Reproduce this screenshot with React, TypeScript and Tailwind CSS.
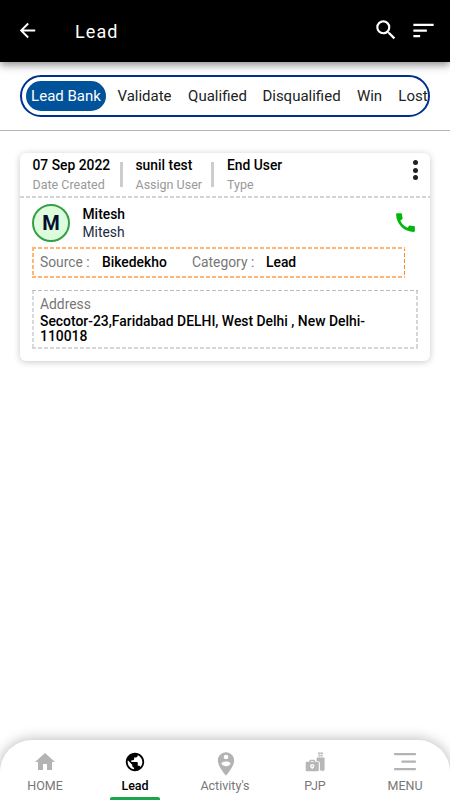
import React, { useState } from 'react';
import {
  MdArrowBack,
  MdCall,
  MdHome,
  MdPersonPinCircle,
  MdPublic,
  MdSearch,
  MdSort
} from 'react-icons/md';

const tabs = [
  { id: 'bank', name: 'Lead Bank', width: 'w-[80px]' },
  { id: 'validate', name: 'Validate', width: 'w-[77px]' },
  { id: 'qualified', name: 'Qualified', width: 'w-[69px]' },
  { id: 'disqualified', name: 'Disqualified', width: 'w-[99px]' },
  { id: 'win', name: 'Win', width: 'w-[37px]' },
  { id: 'lost', name: 'Lost', width: 'w-[50px]' }
];

// Dashed outlines with a 4px dash and a 2px gap
const grayDashes =
  '[background:linear-gradient(90deg,#bdbdbd_4px,transparent_0)_0_0/6px_1px_repeat-x,linear-gradient(90deg,#d6d6d6_4px,transparent_0)_0_100%/6px_2px_repeat-x,linear-gradient(#dadada_4px,transparent_0)_0_0/2px_6px_repeat-y,linear-gradient(#d6d6d6_4px,transparent_0)_100%_0/2px_6px_repeat-y]';
const orangeDashes =
  '[background:linear-gradient(90deg,#ffb573_4px,transparent_0)_0_0/6px_2px_repeat-x,linear-gradient(90deg,#ffb573_4px,transparent_0)_0_100%/6px_2px_repeat-x,linear-gradient(#ffb573_4px,transparent_0)_0_0/2px_6px_repeat-y,linear-gradient(#ff8a20_4px,transparent_0)_100%_0/1px_6px_repeat-y]';
const bottomDashes =
  '[background:linear-gradient(90deg,#d4d4d4_4px,transparent_0)_0_100%/6px_2px_repeat-x]';

const LuggageIcon: React.FC = () => (
  <svg width="20" height="20" viewBox="0 0 20 20" fill="#b7b7b7">
    <path d="M13 0.500h5v1.200h-5zM13.600 1.700h.8v3.600h-.8zM16.600 1.700h.8v3.600h-.8zM14.400 3.300h2.200v.9h-2.200z" />
    <path d="M12.600 5.600h6a1 1 0 0 1 1 1v10.800a1 1 0 0 1-1 1h-.2v.8h-1.200v-.8H14.900V11a1.700 1.700 0 0 0-1.700-1.700H11.600V6.600a1 1 0 0 1 1-1z" />
    <path
      fillRule="evenodd"
      d="M4.300 9.800V9A1.300 1.300 0 0 1 5.600 7.700h3.200A1.300 1.300 0 0 1 10.100 9v.8h2.500A1.200 1.200 0 0 1 13.800 11v7a1.200 1.200 0 0 1-1.200 1.200H1.900A1.200 1.200 0 0 1 .7 18v-7A1.200 1.200 0 0 1 1.900 9.800zM5.600 9.800h3.200V9H5.600zM7.200 12a2.200 2.200 0 0 0-2.200 2.100c0 1.300 2.200 3.100 2.200 3.100s2.200-1.800 2.200-3.100A2.200 2.200 0 0 0 7.200 12zM7.200 13.300a.8.8 0 1 1 0 1.600.8.8 0 0 1 0-1.600z"
    />
  </svg>
);

const MenuLinesIcon: React.FC = () => (
  <svg width="24" height="20" viewBox="0 0 24 20" stroke="#b3b3b3" strokeWidth="2.2" strokeLinecap="round">
    <path d="M2 2.200h20M9.300 9.700H22M2 17.200h20" />
  </svg>
);

const navItems = [
  { id: 'home', name: 'HOME', icon: <MdHome className="w-[24px] h-[24px]" /> },
  { id: 'lead', name: 'Lead', icon: <MdPublic className="w-[22px] h-[22px]" /> },
  { id: 'activity', name: "Activity's", icon: <MdPersonPinCircle className="w-[28px] h-[28px] mt-[4px] ml-px" /> },
  { id: 'pjp', name: 'PJP', icon: <LuggageIcon /> },
  { id: 'menu', name: 'MENU', icon: <MenuLinesIcon /> }
];

const App: React.FC = () => {
  const [activeTab, setActiveTab] = useState('bank');
  const [activeNav, setActiveNav] = useState('lead');

  return (
    <div className="h-screen w-full bg-white flex flex-col overflow-hidden font-['Roboto',sans-serif] text-black">
      {/* Top Bar */}
      <header className="h-[62px] shrink-0 bg-black text-white flex items-center pl-[16px] pr-[13px] shadow-[0_3px_8px_rgba(0,0,0,0.45)]">
        <button>
          <MdArrowBack className="w-[23px] h-[23px] -mt-px" />
        </button>
        <h1 className="ml-[36px] mt-[2px] flex-1 text-[18px] leading-6 tracking-[1.1px]">Lead</h1>
        <button>
          <MdSearch className="w-[26px] h-[26px] -mt-[3px]" />
        </button>
        <button className="ml-[11px]">
          <MdSort className="w-[27px] h-[27px] -mt-[2px]" />
        </button>
      </header>

      {/* Stage Tabs */}
      <div className="h-[69px] shrink-0 px-5 pt-[13px] border-b border-[#b5b5b5]">
        <div className="h-[42px] flex items-center pl-1 rounded-[21px] border-2 border-[#00308f] overflow-hidden">
          {tabs.map((tab) => (
            <button
              key={tab.id}
              onClick={() => setActiveTab(tab.id)}
              className={`${tab.width} h-[30px] shrink-0 rounded-full text-[15px] whitespace-nowrap ${
                activeTab === tab.id ? 'bg-[#00529b] text-white' : 'text-[#222]'
              }`}
            >
              {tab.name}
            </button>
          ))}
        </div>
      </div>

      {/* Lead Card */}
      <main className="flex-1 px-5 pt-[22px]">
        <div className="h-[208px] rounded-[6px] bg-white shadow-[0_1px_7px_rgba(0,0,0,0.22)]">
          <div className={`h-[45px] flex pl-[12.5px] pr-[11px] pt-[3px] ${bottomDashes}`}>
            <div className="w-[87.5px]">
              <div className="text-[13.85px] leading-[18px] font-medium">07 Sep 2022</div>
              <div className="text-[12.5px] leading-[21px] text-[#999]">Date Created</div>
            </div>
            <div className="w-[3px] h-[25px] mt-[6px] bg-[#cdcdcd]" />
            <div className="w-[88px] pl-[12.5px]">
              <div className="text-[13.85px] leading-[18px] font-medium">sunil test</div>
              <div className="text-[12.5px] leading-[21px] text-[#999]">Assign User</div>
            </div>
            <div className="w-[3px] h-[25px] mt-[6px] bg-[#cdcdcd]" />
            <div className="flex-1 pl-[13px]">
              <div className="text-[13.85px] leading-[18px] font-medium">End User</div>
              <div className="text-[12.5px] leading-[21px] text-[#999]">Type</div>
            </div>
            <button className="w-[8px] h-[25px] pt-[4px] flex flex-col items-center gap-[2.5px]">
              <span className="w-[5px] h-[5px] shrink-0 rounded-full bg-[#222]" />
              <span className="w-[5px] h-[5px] shrink-0 rounded-full bg-[#222]" />
              <span className="w-[5px] h-[5px] shrink-0 rounded-full bg-[#222]" />
            </button>
          </div>

          <div className="h-[49px] flex items-start pl-[12px] pr-[12px] pt-[6px]">
            <div className="w-[38px] h-[38px] rounded-full border-2 border-[#34a045] bg-[#dcfcdc] flex items-center justify-center text-[20px] font-bold text-[#06102e]">
              M
            </div>
            <div className="ml-[12.5px] flex-1 pt-px">
              <div className="text-[13.85px] leading-[18px] font-medium">Mitesh</div>
              <div className="text-[13.85px] leading-[19px] text-[#1b2a3e]">Mitesh</div>
            </div>
            <MdCall className="w-[25px] h-[25px] mt-[6px] text-[#00b80c]" />
          </div>

          <div className={`ml-[12px] w-[373px] h-[31px] flex items-center pl-[8px] text-[13.85px] ${orangeDashes}`}>
            <span className="w-[62px] text-[#777]">Source :</span>
            <span className="w-[90px] font-medium">Bikedekho</span>
            <span className="w-[74px] text-[#777]">Category :</span>
            <span className="font-medium">Lead</span>
          </div>

          <div className={`ml-[12px] mt-[12px] w-[386px] h-[59px] pl-[8px] pr-[20px] pt-[5px] ${grayDashes}`}>
            <div className="text-[13.85px] leading-[18px] text-[#777]">Address</div>
            <div className="mt-[1px] text-[13.9px] leading-[15px] font-medium">
              Secotor-23,Faridabad DELHI, West Delhi , New Delhi-
              <wbr />
              110018
            </div>
          </div>
        </div>
      </main>

      {/* Bottom Navigation */}
      <nav className="h-[60px] shrink-0 grid grid-cols-5 rounded-t-[32px] bg-white shadow-[0_0_14px_rgba(0,0,0,0.3)]">
        {navItems.map((item) => {
          const isActive = activeNav === item.id;

          return (
            <button key={item.id} onClick={() => setActiveNav(item.id)} className="flex flex-col items-center">
              <span className={`h-[25px] mt-[9px] flex items-center ${isActive ? 'text-black' : 'text-[#b3b3b3]'}`}>
                {item.icon}
              </span>
              <span className={`text-[12.5px] leading-[16px] mt-[4px] ${isActive ? 'font-medium' : 'text-[#777]'}`}>
                {item.name}
              </span>
              {isActive && <span className="w-[50px] h-[3px] mt-auto rounded-t-[2px] bg-[#1ba54c]" />}
            </button>
          );
        })}
      </nav>
    </div>
  );
};

export default App;
